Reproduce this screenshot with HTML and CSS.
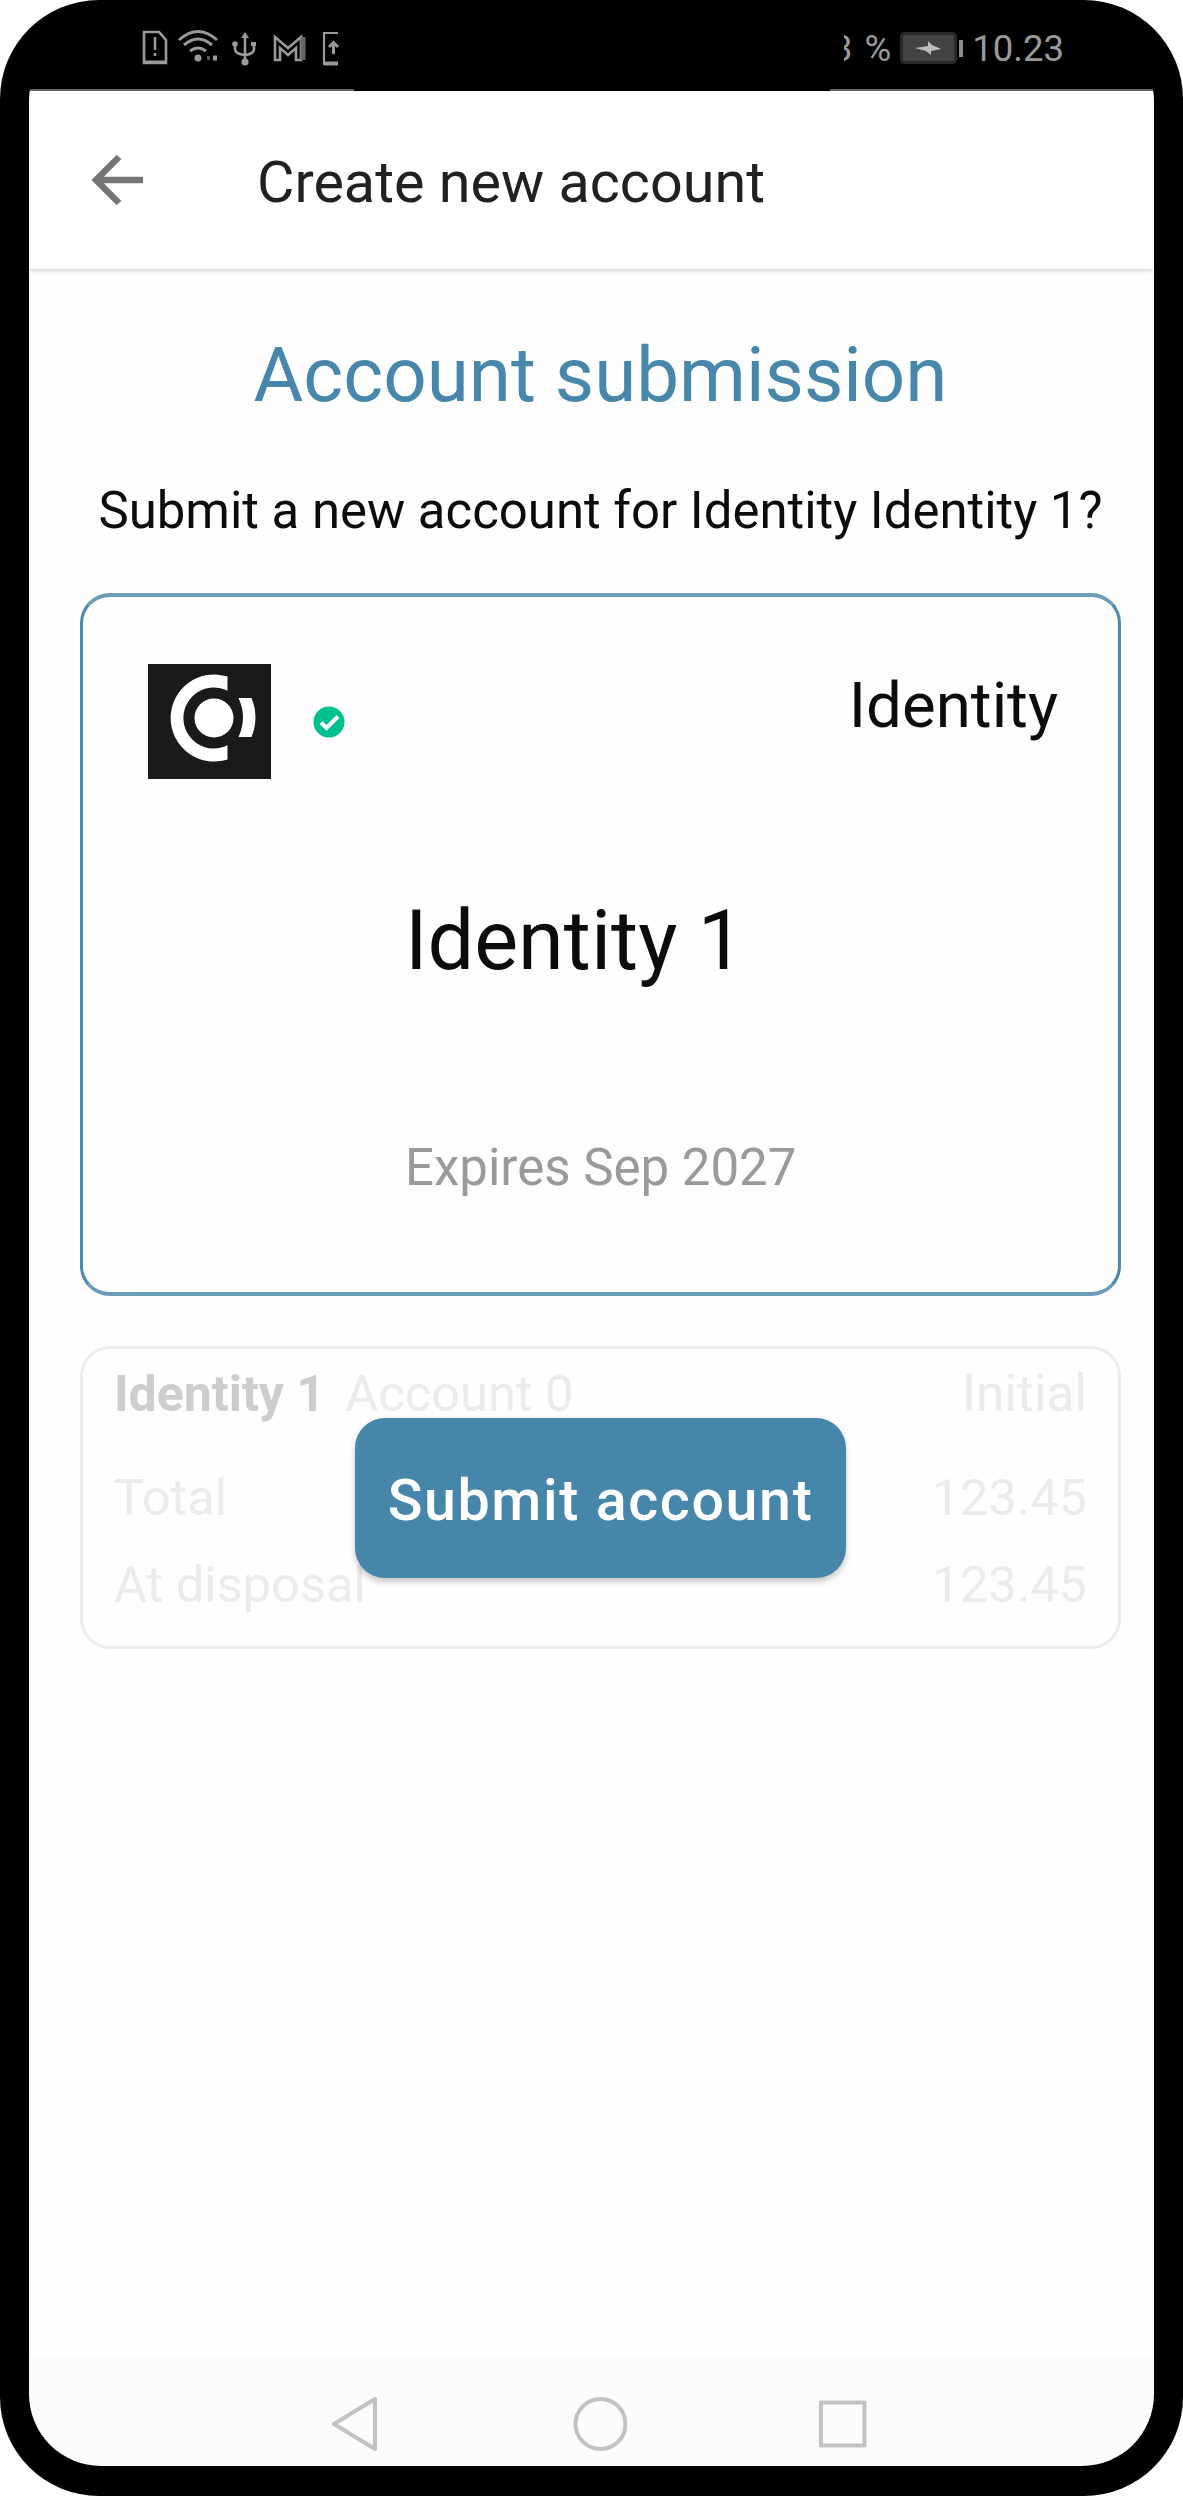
FILE: index.html
```html
<!DOCTYPE html>
<html lang="en">
<head>
<meta charset="utf-8">
<title>Create new account</title>
<link rel="stylesheet" href="styles.css">
</head>
<body>
<div class="phone">
  <div class="screen">
    <header class="status">
      <svg class="status-icons" width="200" height="40" viewBox="140 28 200 40" fill="none" stroke="#9a9a9a" stroke-width="2.6">
        <path d="M144 32h15l7 8v23h-22z"/><path d="M144 62h23" stroke-width="3"/><path d="M155 37v13M155 53v3" />
        <path d="M179 40q19-17 38 0M184 45q14-12 28 0M190 51q8-6 16 0" stroke-width="3"/>
        <circle cx="198" cy="58" r="3.5" fill="#9a9a9a" stroke="none"/><path d="M207 58h3" stroke="#555" stroke-width="4"/><path d="M213 58h4" stroke-width="5"/>
        <path d="M245 35v29M235 44v5q0 5 10 6q9-1 9-6v-5"/><path d="M241 38l4-6 4 6z" fill="#9a9a9a" stroke="none"/><circle cx="245" cy="62" r="3.6" fill="#9a9a9a" stroke="none"/><circle cx="235" cy="44" r="2.8" fill="#9a9a9a" stroke="none"/><path d="M251 42h5v4h-5z" fill="#9a9a9a" stroke="none"/>
        <path d="M275 60V37l13 11 13-11v23h-5V48l-8 7-8-7v12z"/><path d="M303 37v23" stroke="#666" stroke-width="5"/>
        <path d="M338 33h-14v31h14" stroke-width="2.2"/><path d="M324 63.500h14" stroke-width="4"/><path d="M333.500 43v11M329 47l4.500-4.500 4.500 4.500" stroke-width="3"/>
      </svg>
      <div class="status-right">
        <span class="cut"><span>3</span></span><span class="pct">%</span>
        <svg class="battery" width="66" height="34" viewBox="0 0 66 34"><rect x="1.500" y="1.500" width="54" height="29" rx="3" fill="#434343" stroke="#292929" stroke-width="3"/><path d="M15 16l13-2V9l4 4 9 4-10 2v4l-5-4z" fill="#bdbdbd"/><path d="M61 8v17" stroke="#8d8d8d" stroke-width="4"/></svg>
        <span>10.23</span>
      </div>
    </header>
    <div class="edge"><i></i></div>
    <nav class="appbar">
      <svg width="56" height="56" viewBox="0 0 56 56" fill="none" stroke="#757575" stroke-width="6.500"><path d="M53 28H6M29 5L6 28l23 23"/></svg>
      <span class="appbar-title">Create new account</span>
    </nav>
    <main class="content">
      <h1 class="heading">Account submission</h1>
      <p class="question">Submit a new account for Identity Identity 1?</p>
      <section class="identity">
        <div class="identity-top">
          <svg class="logo" width="123" height="115" viewBox="0 0 123 115"><path fill="#1a1a1a" d="M0 0h123v115H0z"/><circle cx="66" cy="54" r="19.500" fill="#fff"/><path d="M79.500 12.600A43.500 43.500 0 1 0 79.500 95.400V81.300A30.500 30.500 0 1 1 79.500 26.700z" fill="#fff"/><path d="M90.500 34h13q8 19.500 0 39h-13q9-19.500 0-39z" fill="#fff"/></svg>
          <svg class="check" width="32" height="32" viewBox="0 0 32 32"><circle cx="16" cy="16" r="15.500" fill="#00c08f"/><path d="M8 16.500l5.500 5.500L25 10.500" fill="none" stroke="#fff" stroke-width="4"/></svg>
          <span class="identity-type">Identity</span>
        </div>
        <div class="identity-name">Identity 1</div>
        <div class="identity-expiry">Expires Sep 2027</div>
      </section>
      <section class="account">
        <div class="row row-head"><span><b>Identity 1</b><span class="account-name">Account 0</span></span><span class="initial">Initial</span></div>
        <div class="row row-total"><span>Total</span><span class="num">123.45</span></div>
        <div class="row row-disposal"><span>At disposal</span><span class="num">123.45</span></div>
        <button class="submit">Submit account</button>
      </section>
    </main>
    <footer class="navbar">
      <svg width="48" height="62" viewBox="0 0 48 62"><path d="M4 31L45 6v50z"/></svg>
      <svg width="54" height="62" viewBox="0 0 54 62"><circle cx="27.500" cy="31" r="25"/></svg>
      <svg width="48" height="62" viewBox="0 0 48 62"><path d="M2 9.500h43.500v43H2z"/></svg>
    </footer>
  </div>
</div>
</body>
</html>
```
FILE: styles.css
```css
* { box-sizing: border-box; }
body { margin: 0; background: #fff; font-family: Roboto, "Liberation Sans", sans-serif; color: #0c0c0c; }
.phone { width: 1183px; height: 2496px; padding: 29px 29px 30px; background: #000; border-radius: 99px; }
.screen { display: flex; flex-direction: column; height: 2437px; background: #000; border-radius: 72px; overflow: hidden; }
.status { display: flex; justify-content: space-between; height: 60px; flex: none; background: #000; padding: 0 90px 0 111px; color: #9a9a9a; }
.status-icons { display: block; margin-top: -1px; }
.status-right { display: flex; align-items: flex-start; font-size: 36.500px; line-height: 44px; margin-top: -2px; }
.cut { display: flex; justify-content: flex-end; width: 9px; overflow: hidden; margin-right: 12px; }
.pct { margin-right: 9px; }
.battery { margin: 5px 6px 0 0; }
.edge { height: 2px; flex: none; background: #6a6a6a; display: flex; justify-content: center; }
.edge i { width: 476px; background: #000; }
.appbar { position: relative; display: flex; align-items: center; height: 178px; flex: none; padding-left: 61px; background: #fff; box-shadow: 0 1px 5px rgba(0,0,0,.22); }
.appbar-title { margin-left: 111px; font-size: 57.500px; line-height: 70px; color: #212121; margin-top: 5px; }
.content { flex: 1; padding: 0 33px 0 51px; background: #fefefe; }
.heading { margin: 60px 0 0; font-size: 76.300px; line-height: 92px; font-weight: 400; color: #4687ab; text-align: center; }
.question { margin: 60px -20px 0; font-size: 50.900px; line-height: 60px; text-align: center; white-space: nowrap; }
.identity { height: 703px; margin-top: 52px; border: 3px solid #4b8bad; border-top: 4px solid #6a9dba; border-bottom: 4px solid #6a9dba; border-radius: 30px; padding: 0 60px 0 65px; }
.identity-top { display: flex; align-items: flex-start; height: 240px; padding-top: 67px; }
.check { margin: 42px 0 0 42px; }
.identity-type { margin-left: auto; font-size: 63.600px; line-height: 80px; margin-top: 2px; }
.identity-name { margin: 54px 0 0 257px; font-size: 82.800px; line-height: 100px; }
.identity-expiry { margin: 147px 0 0 257px; font-size: 51px; line-height: 60px; color: #9a9a9a; }
.account { position: relative; height: 303px; margin-top: 50px; border: 3px solid #ececec; border-radius: 30px; padding: 15px 31px; font-size: 50.600px; line-height: 60px; color: #ebebeb; }
.row { display: flex; justify-content: space-between; }
.row b { color: #cdcdcd; font-size: 50px; }
.initial { font-size: 51.500px; }
.account-name { margin-left: 20px; }
.row-total { margin-top: 44px; }
.row-disposal { margin-top: 27px; }
.submit { position: absolute; left: 272px; top: 69px; width: 491px; height: 160px; padding: 5px 0 0; border: 0; border-radius: 30px; background: #4686aa; color: #fff; font: 500 57.400px Roboto, "Liberation Sans", sans-serif; letter-spacing: 1.600px; white-space: nowrap; box-shadow: 0 4px 6px rgba(0,0,0,.22); }
.navbar { display: flex; height: 109px; flex: none; padding: 36px 0 0 301px; background: #fcfcfc; }
.navbar svg { fill: none; stroke: #c2c2c2; stroke-width: 4; stroke-linejoin: round; }
.navbar svg:nth-child(2) { margin-left: 195px; }
.navbar svg:nth-child(3) { margin-left: 192px; }
```
